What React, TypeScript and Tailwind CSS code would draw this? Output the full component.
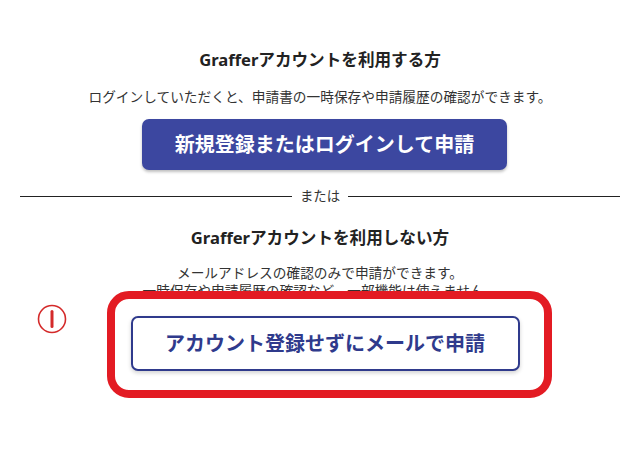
export default function App() {
  return (
    <div
      className="relative w-[640px] h-[473px] bg-white text-[#222] overflow-hidden"
      style={{ fontFamily: '"Noto Sans", "Noto Sans CJK JP", sans-serif' }}
    >
      <div className="flex flex-col items-center pt-[48px]">
        <h2 className="text-[16.6px] leading-[24px] font-bold">Grafferアカウントを利用する方</h2>
        <p className="mt-[15px] text-[13.7px] leading-[20px] text-[#333]">
          ログインしていただくと、申請書の一時保存や申請履歴の確認ができます。
        </p>
        <button className="mt-[12px] ml-[9px] w-[365px] h-[51px] rounded-[7px] bg-[#3c47a0] text-white text-[20px] font-bold shadow-[0_2px_3px_rgba(0,0,0,0.25)]">
          新規登録またはログインして申請
        </button>

        <div className="mt-[16px] w-[600px] flex items-center gap-2">
          <div className="flex-1 h-px bg-[#222]" />
          <span className="text-[13.4px] leading-[20px] text-[#333]">または</span>
          <div className="flex-1 h-px bg-[#222]" />
        </div>

        <h2 className="mt-[20px] text-[16.6px] leading-[24px] font-bold">Grafferアカウントを利用しない方</h2>
        <p className="mt-[14px] text-[13.7px] leading-[18px] text-[#333] text-center">
          メールアドレスの確認のみで申請ができます。
          <br />
          一時保存や申請履歴の確認など、一部機能は使えません。
        </p>
        <button className="mt-[16px] ml-[10px] w-[389px] h-[55px] rounded-[7px] border-2 border-[#2f3a8c] bg-white text-[#2f3a8c] text-[20px] font-bold shadow-[0_2px_4px_rgba(0,0,0,0.18)]">
          アカウント登録せずにメールで申請
        </button>
      </div>

      {/* annotation */}
      <div className="absolute left-[107px] top-[291px] w-[445px] h-[107px] rounded-[22px] border-[8px] border-[#e31b23] pointer-events-none" />
      <svg className="absolute left-[37px] top-[304px]" width="30" height="30" viewBox="0 0 30 30">
        <circle cx="15" cy="15" r="13.5" fill="none" stroke="#d42a2a" strokeWidth="1.6" />
        <line x1="15" y1="7.5" x2="15" y2="22.5" stroke="#d42a2a" strokeWidth="3" strokeLinecap="round" />
      </svg>
    </div>
  );
}
